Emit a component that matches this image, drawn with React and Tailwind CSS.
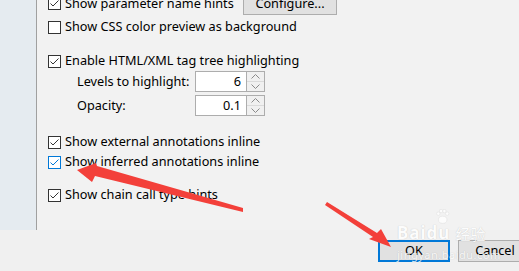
import React from "react";

function Check({ checked = true, blue = false }) {
  const c = blue ? "#0078d7" : "#333333";
  return (
    <div
      className={`flex h-[13px] w-[13px] shrink-0 items-center justify-center border bg-white ${
        blue ? "border-[#0078d7]" : "border-[#333333]"
      }`}
    >
      {checked && (
        <svg width="11" height="11" viewBox="0 0 11 11">
          <path d="M1.5 5.5 L4 8 L9.5 2.5" fill="none" stroke={c} strokeWidth="1" />
        </svg>
      )}
    </div>
  );
}

function Row({ children, checked, blue, className = "" }) {
  return (
    <div className={`flex h-[20px] items-center gap-[4px] ${className}`}>
      <Check checked={checked} blue={blue} />
      <span className="whitespace-nowrap">{children}</span>
    </div>
  );
}

function Spinner({ label, value, className = "" }) {
  return (
    <div className={`flex h-[21px] items-center pl-[29px] ${className}`}>
      <span className="w-[118px] whitespace-nowrap">{label}</span>
      <div className="flex h-[21px] w-[52px] items-center justify-end border border-[#adadad] bg-white pr-[5px]">
        {value}
      </div>
      <div className="flex h-[21px] w-[18px] flex-col border border-l-0 border-[#adadad] bg-[#f0f0f0]">
        <div className="flex flex-1 items-center justify-center border-b border-[#dadada]">
          <svg width="9" height="5" viewBox="0 0 9 5">
            <path d="M0.5 4.5 L4.5 0.5 L8.5 4.5" fill="none" stroke="#8a8a8a" strokeWidth="1" />
          </svg>
        </div>
        <div className="flex flex-1 items-center justify-center">
          <svg width="9" height="5" viewBox="0 0 9 5">
            <path d="M0.5 0.5 L4.5 4.5 L8.5 0.5" fill="none" stroke="#8a8a8a" strokeWidth="1" />
          </svg>
        </div>
      </div>
    </div>
  );
}

export default function App() {
  return (
    <div
      className="relative h-[271px] w-[519px] overflow-hidden bg-[#f0f0f0] text-[12.7px] text-black"
      style={{ fontFamily: "'Noto Sans', 'Liberation Sans', sans-serif" }}
    >
      <div className="flex h-[230px]">
        <div className="w-[37px] shrink-0 border-r border-[#a0a0a0] bg-[#e5ebf0]" />
        <div className="flex-1 bg-[#f2f2f2] pl-[11px]">
          <div className="-mt-[8px] flex h-[23px] items-center gap-[4px]">
            <Check />
            <span className="w-[174px] whitespace-nowrap">Show parameter name hints</span>
            <div className="flex h-[23px] w-[94px] items-center justify-center border border-[#adadad] bg-[#e1e1e1]">
              Configure...
            </div>
          </div>
          <Row checked={false} className="mt-[2px]">Show CSS color preview as background</Row>
          <Row className="mt-[14px]">Enable HTML/XML tag tree highlighting</Row>
          <Spinner label="Levels to highlight:" value="6" />
          <Spinner label="Opacity:" value="0.1" className="mt-[3px]" />
          <Row className="mt-[16px]">Show external annotations inline</Row>
          <Row blue>Show inferred annotations inline</Row>
          <Row className="mt-[13px]">Show chain call type hints</Row>
        </div>
      </div>

      <div className="flex gap-[8px] pl-[378px] pt-[10px]">
        <div className="flex h-[22px] w-[72px] shrink-0 items-center justify-center border-2 border-[#0078d7] bg-[#e1e1e1]">
          OK
        </div>
        <div className="flex h-[22px] w-[74px] shrink-0 items-center justify-center border border-[#adadad] bg-[#e1e1e1]">
          Cancel
        </div>
      </div>

      {/* watermark */}
      <div className="pointer-events-none absolute left-[397px] top-[209px] text-white opacity-80 [text-shadow:0_0_1px_rgba(0,0,0,0.25)]">
        <svg className="absolute left-[38px] top-0" width="15" height="15" viewBox="0 0 16 16">
          <circle cx="3.5" cy="5" r="1.8" fill="white" stroke="#d8d8d8" strokeWidth="0.5" />
          <circle cx="6.5" cy="2.2" r="1.8" fill="white" stroke="#d8d8d8" strokeWidth="0.5" />
          <circle cx="10" cy="2.2" r="1.8" fill="white" stroke="#d8d8d8" strokeWidth="0.5" />
          <circle cx="13" cy="5" r="1.8" fill="white" stroke="#d8d8d8" strokeWidth="0.5" />
          <ellipse cx="8.2" cy="11.5" rx="4.5" ry="3.8" fill="white" stroke="#d8d8d8" strokeWidth="0.5" />
        </svg>
        <div className="mt-[15px] flex items-end gap-[5px] leading-none">
          <span className="text-[17px] font-bold tracking-[1px]">Baidu</span>
          <span className="text-[15px]" style={{ fontFamily: "'Noto Sans CJK SC', sans-serif" }}>
            经验
          </span>
        </div>
        <div className="mt-[8px] text-[11px] leading-none tracking-[0.5px]">jingyan.baidu.com</div>
      </div>

      {/* annotation arrows */}
      <svg className="pointer-events-none absolute left-0 top-0" width="519" height="271" viewBox="0 0 519 271">
        <polygon points="77,170 96,163 97,166 243,208 243,212 95,176 92,182" fill="#f3403a" />
        <polygon points="327,202 377,233 381,229 391,247 369,239 373,237 325,205" fill="#f3403a" />
      </svg>
    </div>
  );
}
